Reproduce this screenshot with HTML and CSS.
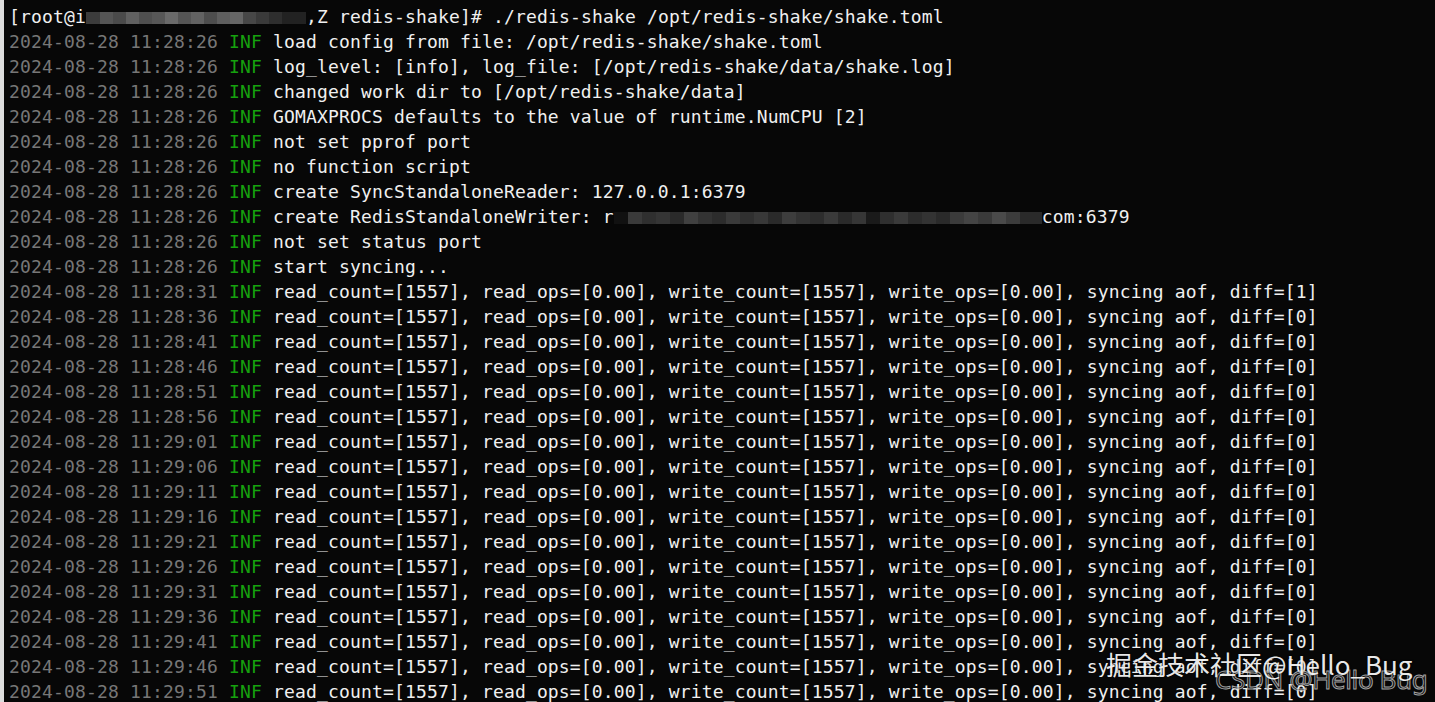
FILE: index.html
```html
<!DOCTYPE html>
<html>
<head>
<meta charset="utf-8">
<link rel="stylesheet" href="styles.css">
</head>
<body>
<div class="term">
<div class="line">[root@i<span class="blur b1"></span>,Z redis-shake]# ./redis-shake /opt/redis-shake/shake.toml</div>
<div class="line"><span class="ts">2024-08-28 11:28:26</span> <span class="lv">INF</span> load config from file: /opt/redis-shake/shake.toml</div>
<div class="line"><span class="ts">2024-08-28 11:28:26</span> <span class="lv">INF</span> log_level: [info], log_file: [/opt/redis-shake/data/shake.log]</div>
<div class="line"><span class="ts">2024-08-28 11:28:26</span> <span class="lv">INF</span> changed work dir to [/opt/redis-shake/data]</div>
<div class="line"><span class="ts">2024-08-28 11:28:26</span> <span class="lv">INF</span> GOMAXPROCS defaults to the value of runtime.NumCPU [2]</div>
<div class="line"><span class="ts">2024-08-28 11:28:26</span> <span class="lv">INF</span> not set pprof port</div>
<div class="line"><span class="ts">2024-08-28 11:28:26</span> <span class="lv">INF</span> no function script</div>
<div class="line"><span class="ts">2024-08-28 11:28:26</span> <span class="lv">INF</span> create SyncStandaloneReader: 127.0.0.1:6379</div>
<div class="line"><span class="ts">2024-08-28 11:28:26</span> <span class="lv">INF</span> create RedisStandaloneWriter: r<span class="blur b2"></span>com:6379</div>
<div class="line"><span class="ts">2024-08-28 11:28:26</span> <span class="lv">INF</span> not set status port</div>
<div class="line"><span class="ts">2024-08-28 11:28:26</span> <span class="lv">INF</span> start syncing...</div>
<div class="line"><span class="ts">2024-08-28 11:28:31</span> <span class="lv">INF</span> read_count=[1557], read_ops=[0.00], write_count=[1557], write_ops=[0.00], syncing aof, diff=[1]</div>
<div class="line"><span class="ts">2024-08-28 11:28:36</span> <span class="lv">INF</span> read_count=[1557], read_ops=[0.00], write_count=[1557], write_ops=[0.00], syncing aof, diff=[0]</div>
<div class="line"><span class="ts">2024-08-28 11:28:41</span> <span class="lv">INF</span> read_count=[1557], read_ops=[0.00], write_count=[1557], write_ops=[0.00], syncing aof, diff=[0]</div>
<div class="line"><span class="ts">2024-08-28 11:28:46</span> <span class="lv">INF</span> read_count=[1557], read_ops=[0.00], write_count=[1557], write_ops=[0.00], syncing aof, diff=[0]</div>
<div class="line"><span class="ts">2024-08-28 11:28:51</span> <span class="lv">INF</span> read_count=[1557], read_ops=[0.00], write_count=[1557], write_ops=[0.00], syncing aof, diff=[0]</div>
<div class="line"><span class="ts">2024-08-28 11:28:56</span> <span class="lv">INF</span> read_count=[1557], read_ops=[0.00], write_count=[1557], write_ops=[0.00], syncing aof, diff=[0]</div>
<div class="line"><span class="ts">2024-08-28 11:29:01</span> <span class="lv">INF</span> read_count=[1557], read_ops=[0.00], write_count=[1557], write_ops=[0.00], syncing aof, diff=[0]</div>
<div class="line"><span class="ts">2024-08-28 11:29:06</span> <span class="lv">INF</span> read_count=[1557], read_ops=[0.00], write_count=[1557], write_ops=[0.00], syncing aof, diff=[0]</div>
<div class="line"><span class="ts">2024-08-28 11:29:11</span> <span class="lv">INF</span> read_count=[1557], read_ops=[0.00], write_count=[1557], write_ops=[0.00], syncing aof, diff=[0]</div>
<div class="line"><span class="ts">2024-08-28 11:29:16</span> <span class="lv">INF</span> read_count=[1557], read_ops=[0.00], write_count=[1557], write_ops=[0.00], syncing aof, diff=[0]</div>
<div class="line"><span class="ts">2024-08-28 11:29:21</span> <span class="lv">INF</span> read_count=[1557], read_ops=[0.00], write_count=[1557], write_ops=[0.00], syncing aof, diff=[0]</div>
<div class="line"><span class="ts">2024-08-28 11:29:26</span> <span class="lv">INF</span> read_count=[1557], read_ops=[0.00], write_count=[1557], write_ops=[0.00], syncing aof, diff=[0]</div>
<div class="line"><span class="ts">2024-08-28 11:29:31</span> <span class="lv">INF</span> read_count=[1557], read_ops=[0.00], write_count=[1557], write_ops=[0.00], syncing aof, diff=[0]</div>
<div class="line"><span class="ts">2024-08-28 11:29:36</span> <span class="lv">INF</span> read_count=[1557], read_ops=[0.00], write_count=[1557], write_ops=[0.00], syncing aof, diff=[0]</div>
<div class="line"><span class="ts">2024-08-28 11:29:41</span> <span class="lv">INF</span> read_count=[1557], read_ops=[0.00], write_count=[1557], write_ops=[0.00], syncing aof, diff=[0]</div>
<div class="line"><span class="ts">2024-08-28 11:29:46</span> <span class="lv">INF</span> read_count=[1557], read_ops=[0.00], write_count=[1557], write_ops=[0.00], syncing aof, diff=[0]</div>
<div class="line"><span class="ts">2024-08-28 11:29:51</span> <span class="lv">INF</span> read_count=[1557], read_ops=[0.00], write_count=[1557], write_ops=[0.00], syncing aof, diff=[0]</div>
</div>
<div class="wm-csdn">CSDN @Hello Bug</div>
<div class="wm-juejin">掘金技术社区@Hello_Bug</div>
</body>
</html>
```

FILE: styles.css
```css
html, body {
  margin: 0;
  padding: 0;
  background: #070707;
  height: 702px;
  overflow: hidden;
}
body {
  position: relative;
}
.term {
  box-sizing: border-box;
  height: 702px;
  border-left: 4px solid #dcdcdc;
  padding: 4px 0 0 5px;
  font-family: "DejaVu Sans Mono", "Liberation Mono", monospace;
  font-size: 18px;
  letter-spacing: 0.16px;
  color: #f0f0f0;
}
.line {
  height: 25px;
  line-height: 25px;
  white-space: pre;
}
.ts {
  color: #777777;
}
.lv {
  color: #16a10e;
}
.blur {
  display: inline-block;
  height: 12px;
  vertical-align: middle;
}
.b1 {
  width: 220px;
  background: linear-gradient(90deg,
    #3c3c3c 0 14px, #555 14px 27px, #4a4a4a 27px 40px, #606060 40px 53px,
    #4f4f4f 53px 66px, #575757 66px 79px, #6a6a6a 79px 92px, #555 92px 105px,
    #626262 105px 118px, #4d4d4d 118px 131px, #5e5e5e 131px 144px, #666 144px 157px,
    #474747 157px 170px, #3a3a3a 170px 183px, #2e2e2e 183px 196px, #222 196px 220px);
}
.b2 {
  width: 428px;
  background: linear-gradient(90deg,
    #111 0 14px, #3a3a3a 14px 28px, #2f2f2f 28px 42px, #353535 42px 56px,
    #2a2a2a 56px 70px, #404040 70px 84px, #333 84px 98px, #2c2c2c 98px 112px,
    #3a3a3a 112px 126px, #303030 126px 140px, #383838 140px 154px, #2a2a2a 154px 168px,
    #3d3d3d 168px 182px, #333 182px 196px, #2d2d2d 196px 210px, #3a3a3a 210px 224px,
    #2a2a2a 224px 238px, #363636 238px 252px, #1a1a1a 252px 266px, #2f2f2f 266px 280px,
    #3a3a3a 280px 294px, #2c2c2c 294px 308px, #333 308px 322px, #2a2a2a 322px 336px,
    #3b3b3b 336px 350px, #444 350px 364px, #3a3a3a 364px 378px, #4a4a4a 378px 392px,
    #3c3c3c 392px 406px, #2a2a2a 406px 428px);
}
.wm-csdn {
  position: absolute;
  left: 1215px;
  top: 661px;
  font-family: "Noto Sans", "Liberation Sans", sans-serif;
  font-size: 26px;
  line-height: 36px;
  letter-spacing: -0.4px;
  color: rgba(40, 40, 40, 0.4);
  -webkit-text-stroke: 1px rgba(210, 210, 210, 0.75);
  white-space: nowrap;
}
.wm-juejin {
  position: absolute;
  left: 1106px;
  top: 646px;
  font-family: "Noto Sans CJK SC", "Noto Sans", sans-serif;
  font-size: 26px;
  line-height: 36px;
  color: rgba(255, 255, 255, 0.92);
  text-shadow: 0 0 2px rgba(0, 0, 0, 0.6);
  white-space: nowrap;
}
```
